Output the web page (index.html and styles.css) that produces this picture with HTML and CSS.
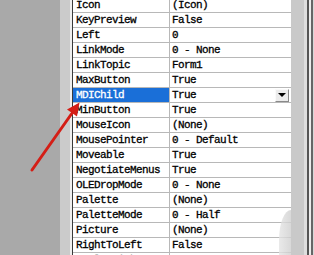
FILE: index.html
```html
<!DOCTYPE html>
<html lang="en">
  <head>
    <meta charset="UTF-8" />
    <title>Properties - Form1</title>
    <link rel="stylesheet" href="styles.css">
  </head>
  <body>
    <div class="screen">
      <div class="desk"></div>
      <div class="edge"></div>
      <div class="lip"></div>

      <div class="grid">
        <div class="row"><div class="name">Icon</div><div class="value">(Icon)</div></div>
        <div class="row"><div class="name">KeyPreview</div><div class="value">False</div></div>
        <div class="row"><div class="name">Left</div><div class="value">0</div></div>
        <div class="row"><div class="name">LinkMode</div><div class="value">0 - None</div></div>
        <div class="row"><div class="name">LinkTopic</div><div class="value">Form1</div></div>
        <div class="row"><div class="name">MaxButton</div><div class="value">True</div></div>
        <div class="row selected">
          <div class="name">MDIChild</div>
          <div class="value">
            True
            <span class="drop"><span class="tri"></span></span>
          </div>
        </div>
        <div class="row"><div class="name">MinButton</div><div class="value">True</div></div>
        <div class="row"><div class="name">MouseIcon</div><div class="value">(None)</div></div>
        <div class="row"><div class="name">MousePointer</div><div class="value">0 - Default</div></div>
        <div class="row"><div class="name">Moveable</div><div class="value">True</div></div>
        <div class="row"><div class="name">NegotiateMenus</div><div class="value">True</div></div>
        <div class="row"><div class="name">OLEDropMode</div><div class="value">0 - None</div></div>
        <div class="row"><div class="name">Palette</div><div class="value">(None)</div></div>
        <div class="row"><div class="name">PaletteMode</div><div class="value">0 - Half</div></div>
        <div class="row"><div class="name">Picture</div><div class="value">(None)</div></div>
        <div class="row"><div class="name">RightToLeft</div><div class="value">False</div></div>
        <div class="row"><div class="name">ScaleHeight</div><div class="value">3195</div></div>

        <!-- watermark smudge in the corner -->
        <div class="smudge"></div>
      </div>

      <div class="scroll"></div>
      <div class="frame"></div>

      <svg class="arrow" width="314" height="255" viewBox="0 0 314 255">
        <line x1="32" y1="170" x2="72.5" y2="112.5" stroke="#d41e16" stroke-width="3" stroke-linecap="round" />
        <polygon points="79.5,102.5 77,116.5 67,109.5" fill="#d41e16" />
      </svg>
    </div>
  </body>
</html>
```

FILE: styles.css
```css
* {
  margin: 0;
  padding: 0;
  box-sizing: border-box;
}

body {
  width: 314px;
  height: 255px;
  overflow: hidden;
  background: #a9a9a9;
}

.screen {
  position: relative;
  display: flex;
  height: 255px;
  overflow: hidden;
}

.desk {
  width: 60px;
  background: #a9a9a9;
}

.edge {
  width: 10px;
  background: #cbcbcb;
}

.lip {
  width: 2px;
  background: #efefef;
}

.grid {
  position: relative;
  width: 219px;
  margin-top: -2px;
  background: #fff;
  border-left: 1px solid #3a3a3a;
  font-family: "Liberation Mono", monospace;
  font-size: 11px;
  letter-spacing: -0.6px;
  color: #000;
  -webkit-text-stroke: 0.3px #000;
}

.row {
  display: flex;
  height: 15px;
  border-bottom: 1px solid #b8b8b8;
}

.name {
  width: 97px;
  padding-left: 3px;
  line-height: 14px;
  white-space: nowrap;
  overflow: hidden;
  border-right: 1px solid #b8b8b8;
}

.value {
  flex: 1;
  display: flex;
  align-items: center;
  padding-left: 2px;
  line-height: 14px;
  white-space: nowrap;
}

.selected .name {
  background: #1a6fd8;
  color: #fff;
  -webkit-text-stroke: 0.3px #fff;
}

.drop {
  margin-left: auto;
  margin-right: 2px;
  width: 14px;
  height: 13px;
  display: flex;
  align-items: center;
  justify-content: center;
  background: #ececec;
  border: 1px solid;
  border-color: #fafafa #8a8a8a #8a8a8a #fafafa;
}

.tri {
  width: 0;
  height: 0;
  border-left: 4px solid transparent;
  border-right: 4px solid transparent;
  border-top: 4px solid #000;
}

.smudge {
  position: absolute;
  right: 0;
  top: 212px;
  width: 12px;
  height: 48px;
  border-top-left-radius: 12px 30px;
  background: linear-gradient(90deg, #e4e4e4, #cfcfcf);
  opacity: 0.8;
}

.scroll {
  width: 13px;
  background: #c9c9c9;
}

.frame {
  flex: 1;
  background: linear-gradient(90deg,
    #dedede 0, #dedede 3px,
    #555 3px, #555 5px,
    #ececec 5px, #ececec 7px,
    #666 7px, #666 9px,
    #d8d8d8 9px);
}

.arrow {
  position: absolute;
  left: 0;
  top: 0;
}
```
